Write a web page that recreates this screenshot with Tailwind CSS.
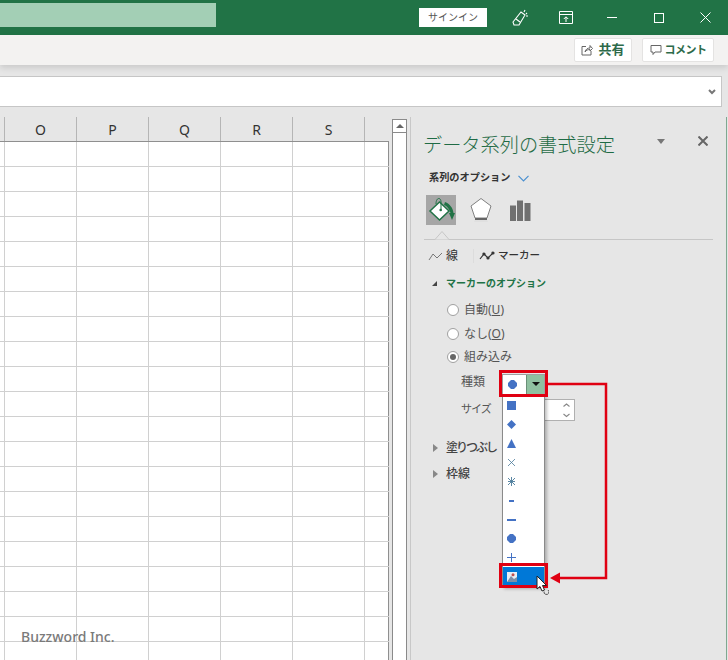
<!DOCTYPE html>
<html lang="ja">
<head>
  <meta charset="UTF-8" />
  <title>データ系列の書式設定</title>
  <script src="https://cdn.jsdelivr.net/npm/@tailwindcss/browser@4"></script>
</head>
<body class="relative w-[728px] h-[660px] overflow-hidden bg-[#e6e6e6] font-['Noto_Sans','Noto_Sans_CJK_JP',sans-serif] text-[#333]">

  <!-- title bar -->
  <div class="h-[35px] bg-[#217346] flex items-center">
    <div class="w-[216px] h-[24px] mb-[5px] bg-[#a3cfb5]"></div>
    <div class="ml-[203px] mb-[1px] w-[68px] h-[19px] bg-white flex items-center justify-center text-[10px] text-[#555]">サインイン</div>
    <svg class="ml-[24px]" width="18" height="18" viewBox="0 0 18 18" fill="none" stroke="#fff" stroke-width="1.1"><path d="M2 13 L10 3 L14 6 L8 16 L3 16 Z M5 10 L9 13 M14 1 L13 3 M16 4 L15 5 M17 7 L15 7"/></svg>
    <svg class="ml-[30px]" width="14" height="13" viewBox="0 0 14 13" fill="none" stroke="#fff" stroke-width="1"><path d="M.5 .5H13.5V12.5H.5Z M.5 3.5H13.5 M7 11V6 M4.8 8L7 5.8L9.2 8"/></svg>
    <div class="ml-[34px] w-[10px] h-px bg-white"></div>
    <div class="ml-[37px] w-[10px] h-[10px] border border-white"></div>
    <svg class="ml-[36px]" width="11" height="11" viewBox="0 0 11 11" stroke="#fff" stroke-width="1"><path d="M.5 .5L10.5 10.5M10.5 .5L.5 10.5"/></svg>
  </div>

  <!-- toolbar -->
  <div class="h-[30px] bg-[#f3f2f1] flex items-center justify-end pr-[14px] gap-[10px] shadow-[0_3px_6px_rgba(0,0,0,0.12)]">
    <div class="w-[58px] h-[24px] bg-white border border-[#e4e3e2] rounded-[2px] flex items-center justify-center gap-[5px] text-[13px] font-bold text-[#2d6a4a]">
      <svg width="12" height="12" viewBox="0 0 12 12" fill="none" stroke="#666" stroke-width="1"><path d="M5 2.5H1V11H10V7 M4 8C4.500 5 7 4 9 4V1.500L11.500 4.500L9 7V5.500C7 5.500 5.500 6 4 8Z"/></svg>
      <span>共有</span>
    </div>
    <div class="w-[72px] h-[24px] bg-white border border-[#e4e3e2] rounded-[2px] flex items-center justify-center gap-[3px] text-[11px] tracking-[-0.5px] font-bold text-[#2d6a4a]">
      <svg width="12" height="12" viewBox="0 0 12 12" fill="none" stroke="#666" stroke-width="1"><path d="M1 1.500H11V8H5L3 10.500V8H1Z"/></svg>
      <span>コメント</span>
    </div>
  </div>

  <!-- formula bar -->
  <div class="mt-[11px] w-[722px] h-[31px] bg-white border-y border-r border-[#c6c6c6] flex items-center justify-end pr-[5px]">
    <svg width="8" height="6" viewBox="0 0 8 6" fill="none" stroke="#777" stroke-width="2"><path d="M1 1L4 4L7 1"/></svg>
  </div>

  <div class="flex mt-[10px]">
    <!-- sheet -->
    <div class="w-[392px] shrink-0">
      <div class="flex h-[25px] w-[389px] border-b border-[#8f8f8f] text-[14px] text-[#333]">
        <div class="w-[5px] border-r border-[#b5b5b5]"></div>
        <div class="w-[72px] border-r border-[#b5b5b5] flex items-center justify-center">O</div>
        <div class="w-[72px] border-r border-[#b5b5b5] flex items-center justify-center">P</div>
        <div class="w-[72px] border-r border-[#b5b5b5] flex items-center justify-center">Q</div>
        <div class="w-[72px] border-r border-[#b5b5b5] flex items-center justify-center">R</div>
        <div class="w-[72px] border-r border-[#b5b5b5] flex items-center justify-center">S</div>
        <div class="w-[24px] border-r border-transparent"></div>
      </div>
      <div id="rows"></div>
    </div>

    <!-- scrollbar -->
    <div class="w-[15px] h-[541px] mt-[2px] bg-white border-x border-[#8a8a8a] shrink-0">
      <div class="h-[14px] border-y border-[#8a8a8a] flex items-center justify-center">
        <div class="w-0 h-0 border-x-[4px] border-x-transparent border-b-[4px] border-b-[#666]"></div>
      </div>
    </div>

    <!-- task pane -->
    <div class="ml-[3px] w-[317px] h-[543px] border-l border-r border-l-[#c8c8c8] border-r-[#7fa890] relative">
      <div class="flex items-center h-[34px] mt-[11px] pl-[12px]">
        <span class="text-[19.2px] font-light text-[#1f6b45] w-[225px] shrink-0 whitespace-nowrap">データ系列の書式設定</span>
        <div class="w-0 h-0 border-x-[4.500px] border-x-transparent border-t-[5px] border-t-[#777] mb-[8px] ml-[9px]"></div>
        <svg class="ml-[33px] mb-[8px]" width="10" height="10" viewBox="0 0 10 10" stroke="#666" stroke-width="2"><path d="M.5 .5L9.5 9.500M9.5 .5L.5 9.500"/></svg>
      </div>
      <div class="flex items-center h-[20px] mt-[6px] pl-[18px] gap-[7px]">
        <span class="text-[10.2px] font-bold text-[#333] whitespace-nowrap">系列のオプション</span>
        <svg width="11" height="7" viewBox="0 0 11 7" fill="none" stroke="#4a90d0" stroke-width="1.200"><path d="M.5 .8L5.500 5.800L10.500 .8"/></svg>
      </div>

      <!-- category icons -->
      <div class="flex items-center h-[30px] mt-[7px] pl-[15px]">
        <div class="w-[30px] h-[30px] bg-[#a6a6a6]">
          <svg width="30" height="30" viewBox="0 0 30 30"><path d="M19 7C24 9 27 13 27.500 18L29 18L26 25L23 18L24.500 18C23.500 14 21 11 18 10Z" fill="#217346"/><path d="M13.500 7L23 16L13.500 25L4 16Z" fill="#fff" stroke="#217346" stroke-width="1.500"/><path d="M10 9C10 2 15 2 15 7V14" fill="none" stroke="#217346" stroke-width="1"/><circle cx="14.700" cy="15" r="1.300" fill="#217346"/></svg>
        </div>
        <svg class="ml-[14px]" width="22" height="26" viewBox="0 0 22 26"><path d="M11 1.500L21 9L17 21H5L1 9Z" fill="#fff" stroke="#808080" stroke-width="1"/><path d="M5 21H17V23H5Z" fill="#666"/><path d="M5 23H17L18 25H4Z" fill="#e0e0e0"/></svg>
        <svg class="ml-[18px]" width="21" height="21" viewBox="0 0 21 21" fill="#707070"><path d="M0 5.500H6V21H0Z M7 .5H13V21H7Z M14.500 3H20.500V21H14.500Z"/></svg>
      </div>

      <!-- divider -->
      <div class="relative mt-[14px] ml-[13px] w-[289px] h-px bg-[#c6c6c6]">
        <svg class="absolute left-[11px] -top-[8px]" width="14" height="9" viewBox="0 0 14 9"><path d="M0 8.500L7 .5L14 8.500" fill="#e6e6e6" stroke="#c6c6c6"/></svg>
      </div>

      <!-- tabs -->
      <div class="flex items-center h-[20px] mt-[6px] pl-[17px] text-[12px] text-[#333]">
        <svg width="15" height="10" viewBox="0 0 15 10" fill="none" stroke="#777" stroke-width="1"><path d="M1 9L5 3L9 7L14 2"/></svg>
        <span class="ml-[3px]">線</span>
        <div class="ml-[15px] w-px h-[14px] bg-[#dcdcdc]"></div>
        <svg class="ml-[5px]" width="16" height="10" viewBox="0 0 16 10" fill="none" stroke="#333" stroke-width="1.200"><path d="M1 8L5 3L9 7L14 2"/><circle cx="5" cy="3" r="1" fill="#333"/><circle cx="9" cy="7" r="1" fill="#333"/><circle cx="14" cy="2" r="1" fill="#333"/></svg>
        <span class="ml-[3px] text-[10.5px] font-medium whitespace-nowrap">マーカー</span>
      </div>

      <!-- marker options -->
      <div class="flex items-center h-[20px] mt-[7px] pl-[21px]">
        <div class="w-0 h-0 border-l-[5px] border-l-transparent border-b-[5px] border-b-[#444]"></div>
        <span class="ml-[9px] text-[10px] font-bold text-[#217346] whitespace-nowrap">マーカーのオプション</span>
      </div>

      <div class="mt-[5px] pl-[36px] text-[12px] text-[#555]">
        <div class="flex items-center h-[24px] gap-[5px]">
          <div class="w-[12px] h-[12px] rounded-full bg-white border border-[#a0a0a0]"></div>
          <span>自動(<span class="underline">U</span>)</span>
        </div>
        <div class="flex items-center h-[23px] gap-[5px]">
          <div class="w-[12px] h-[12px] rounded-full bg-white border border-[#a0a0a0]"></div>
          <span>なし(<span class="underline">O</span>)</span>
        </div>
        <div class="flex items-center h-[24px] gap-[5px]">
          <div class="w-[12px] h-[12px] rounded-full bg-white border border-[#a0a0a0] flex items-center justify-center">
            <div class="w-[6px] h-[6px] rounded-full bg-[#666]"></div>
          </div>
          <span>組み込み</span>
        </div>
      </div>

      <div class="mt-[3px] pl-[50px] text-[12px] text-[#555]">
        <div class="flex items-center h-[24px]">
          <span class="w-[41px] mb-[4px]">種類</span>
          <div class="w-[43px] h-[21px] flex border border-[#a0a0a0] bg-white">
            <div class="flex-1 flex items-center justify-center pr-[5px]">
              <svg width="9" height="9" viewBox="0 0 9 9"><path d="M3 0H6L9 3V6L6 9H3L0 6V3Z" fill="#4472c4"/></svg>
            </div>
            <div class="w-[18px] bg-[#8fc0a0] border-l border-[#6a8f78] flex items-center justify-center">
              <div class="w-0 h-0 border-x-[4px] border-x-transparent border-t-[4px] border-t-[#111]"></div>
            </div>
          </div>
        </div>
        <div class="flex items-center h-[22px] mt-[3px]">
          <span class="w-[41px] mb-[2px] text-[11px] tracking-[-1px] whitespace-nowrap">サイズ</span>
          <div class="w-[73px] h-[22px] flex justify-end border border-[#b0b0b0] bg-white">
            <svg class="mr-[3px] mt-[3px]" width="9" height="15" viewBox="0 0 9 15" fill="none" stroke="#888" stroke-width="1.100"><path d="M1.500 3.500L4.500 1L7.500 3.500M1.500 11L4.500 13.500L7.500 11"/></svg>
          </div>
        </div>
      </div>

      <div class="mt-[17px] pl-[22px] text-[12px] font-medium text-[#444]">
        <div class="flex items-center h-[20px]">
          <div class="w-0 h-0 border-y-[4px] border-y-transparent border-l-[5px] border-l-[#888]"></div>
          <span class="ml-[8px] tracking-[-2px] whitespace-nowrap">塗りつぶし</span>
        </div>
        <div class="flex items-center h-[20px] mt-[6px]">
          <div class="w-0 h-0 border-y-[4px] border-y-transparent border-l-[5px] border-l-[#888]"></div>
          <span class="ml-[8px]">枠線</span>
        </div>
      </div>
    </div>
  </div>

  <!-- marker dropdown -->
  <div class="absolute left-[502px] top-[395px] w-[43px] h-[192px] bg-white border border-[#8a8a8a] shadow-[2px_2px_3px_rgba(0,0,0,0.25)]">
    <div class="h-[19px] flex items-center pl-[4px]"><svg width="9" height="9" viewBox="0 0 9 9"><path d="M0 0H9V9H0Z" fill="#4472c4"/></svg></div>
    <div class="h-[19px] flex items-center pl-[4px]"><svg width="9" height="9" viewBox="0 0 9 9"><path d="M4.500 0L9 4.500L4.500 9L0 4.500Z" fill="#4472c4"/></svg></div>
    <div class="h-[19px] flex items-center pl-[4px]"><svg width="9" height="9" viewBox="0 0 9 9"><path d="M4.500 0L9 9H0Z" fill="#4472c4"/></svg></div>
    <div class="h-[19px] flex items-center pl-[4px]"><svg width="9" height="9" viewBox="0 0 9 9" stroke="#4a7a9a" stroke-width=".8"><path d="M1 1L8 8M8 1L1 8"/></svg></div>
    <div class="h-[19px] flex items-center pl-[4px]"><svg width="9" height="9" viewBox="0 0 9 9" stroke="#4a7a9a" stroke-width=".9"><path d="M1 1L8 8M8 1L1 8M4.500 0V9M1 4.500H8"/></svg></div>
    <div class="h-[19px] flex items-center pl-[6px]"><div class="w-[5px] h-[2px] bg-[#4472c4]"></div></div>
    <div class="h-[19px] flex items-center pl-[4px]"><div class="w-[9px] h-[2px] bg-[#4472c4]"></div></div>
    <div class="h-[19px] flex items-center pl-[4px]"><svg width="9" height="9" viewBox="0 0 9 9"><path d="M3 0H6L9 3V6L6 9H3L0 6V3Z" fill="#4472c4"/></svg></div>
    <div class="h-[19px] flex items-center pl-[4px]"><svg width="9" height="9" viewBox="0 0 9 9" fill="#4472c4"><path d="M0 4H9V5H0Z M4 0H5V9H4Z"/></svg></div>
    <div class="h-[19px] bg-[#0078d7] flex items-center pl-[4px]">
      <svg width="10" height="10" viewBox="0 0 10 10"><path d="M0 0H10V10H0Z" fill="#e8eef5"/><path d="M0 10L4 4L7 7L10 5V10Z" fill="#7c8ea8"/><circle cx="6" cy="2.800" r="1.500" fill="#c05050"/></svg>
    </div>
  </div>

  <!-- red callouts -->
  <div class="absolute left-[499px] top-[370px] w-[49px] h-[27px] border-[3px] border-[#e00012]"></div>
  <div class="absolute left-[499px] top-[563px] w-[49px] h-[25px] border-[3px] border-[#e00012]"></div>
  <svg class="absolute left-[548px] top-[380px]" width="62" height="206" viewBox="0 0 62 206" fill="none">
    <path d="M0 4H58V198H10" stroke="#e00012" stroke-width="2.500"/>
    <path d="M2 198L12 192.500V203.500Z" fill="#e00012"/>
  </svg>

  <!-- mouse cursor -->
  <svg class="absolute left-[536px] top-[575px]" width="13" height="20" viewBox="0 0 13 20">
    <path d="M1 1V14L4 11.500L6 16L8.500 15L6.500 10.500H10.500Z" fill="#fff" stroke="#222" stroke-width="1"/>
    <path d="M8 16.500A2.500 2.500 0 1 0 12 15" fill="none" stroke="#555" stroke-width="1"/>
  </svg>

  <!-- watermark -->
  <div class="absolute left-[21px] top-[626px] text-[14px] font-medium text-[#7a7a7a]">Buzzword Inc.</div>

  <script>
    const cell = 'h-full w-[72px] border-r border-[#d0d0d0]';
    const row = `<div class="flex h-[25px] w-[389px] bg-white border-b border-[#d0d0d0]">
      <div class="h-full w-[5px] border-r border-[#d0d0d0]"></div>
      ${`<div class="${cell}"></div>`.repeat(5)}
      <div class="h-full w-[24px] border-r border-[#8f8f8f]"></div>
    </div>`;
    document.getElementById('rows').innerHTML = row.repeat(21);
  </script>
</body>
</html>
